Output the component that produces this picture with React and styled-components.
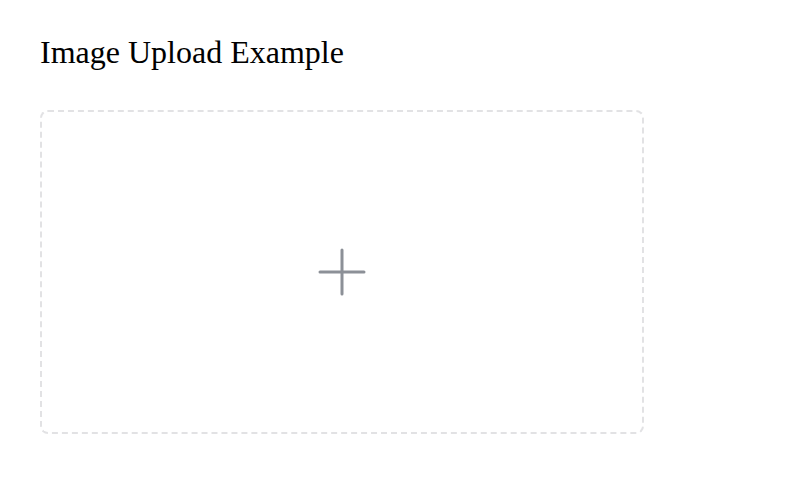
import React from "react";
import styled, { createGlobalStyle } from "styled-components";

const Global = createGlobalStyle`
  html, body { margin: 0; padding: 0; background: #fff; }
  body { font-family: "Liberation Serif", "Times New Roman", serif; color: #000; }
`;

const Page = styled.div`
  padding: 35px 40px 40px;
`;

const Title = styled.h1`
  margin: 0 0 40px;
  font-size: 32px;
  font-weight: 400;
  line-height: 35px;
`;

const Dropzone = styled.div`
  box-sizing: border-box;
  width: 604px;
  height: 324px;
  border: 2px dashed #e2e2e4;
  border-radius: 8px;
  display: flex;
  align-items: center;
  justify-content: center;
  cursor: pointer;
`;

const PlusIcon = () => (
  <svg width="48" height="48" viewBox="0 0 48 48" fill="none">
    <path d="M24 2v44M2 24h44" stroke="#8c9097" strokeWidth="3" strokeLinecap="round" />
  </svg>
);

export default function App() {
  return (
    <>
      <Global />
      <Page>
        <Title>Image Upload Example</Title>
        <Dropzone>
          <PlusIcon />
        </Dropzone>
      </Page>
    </>
  );
}
